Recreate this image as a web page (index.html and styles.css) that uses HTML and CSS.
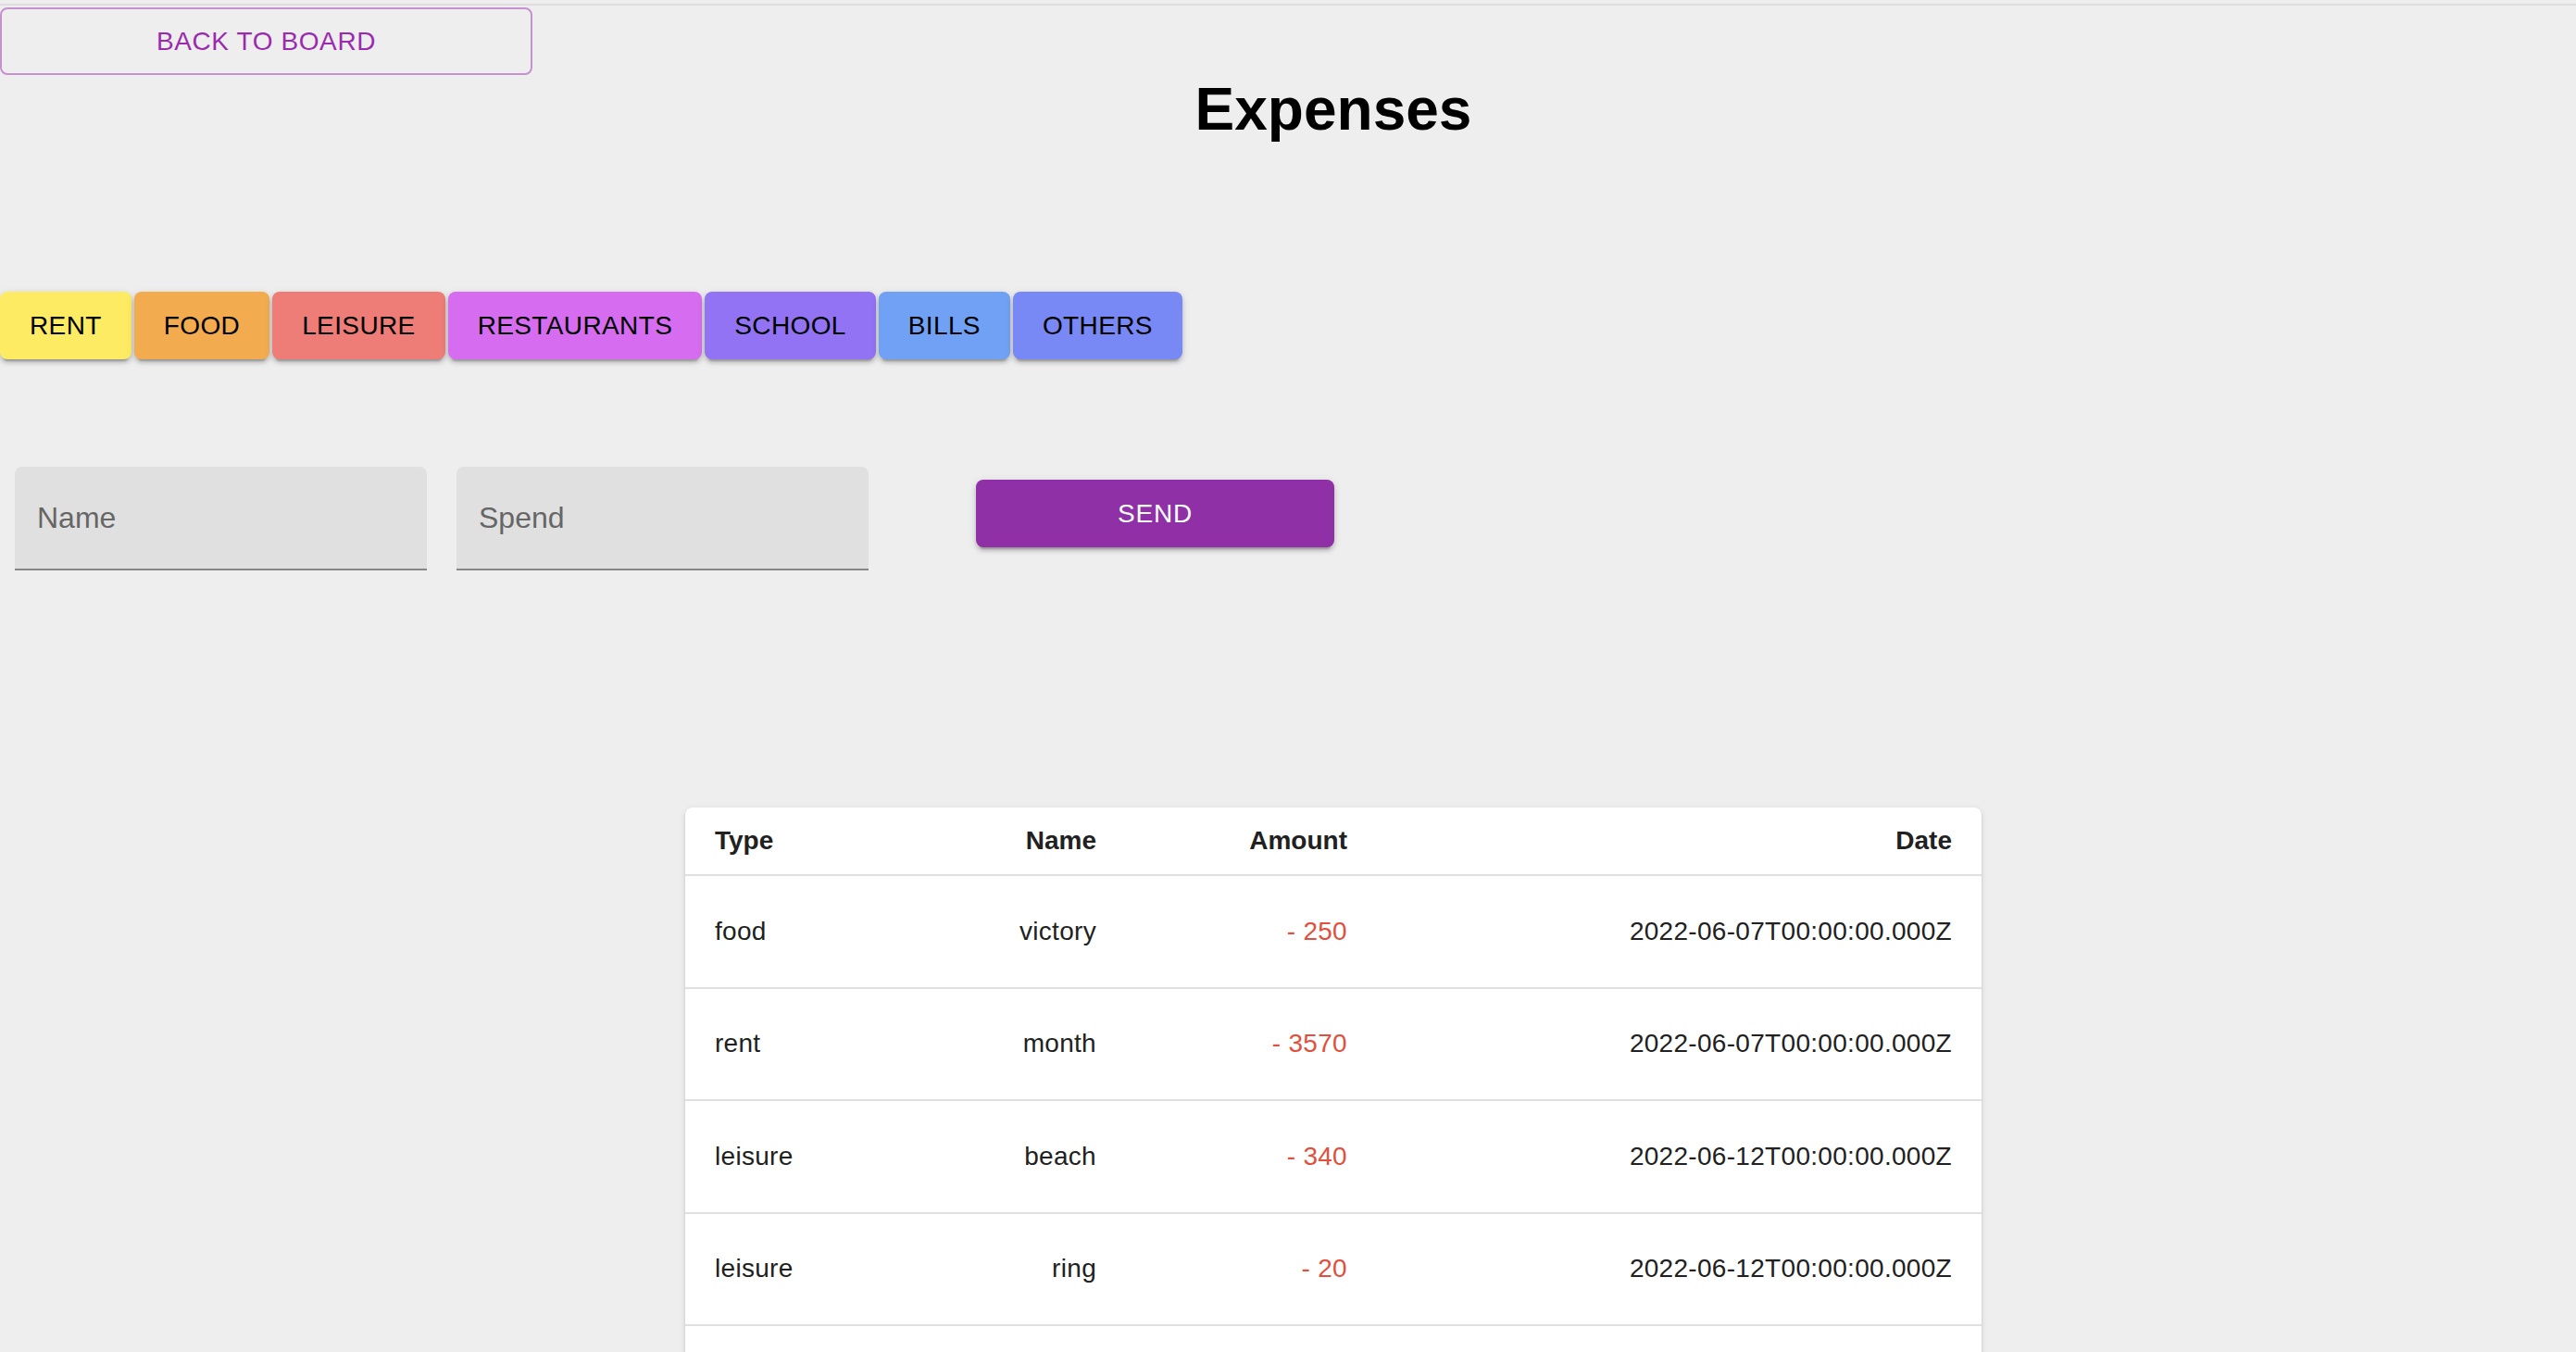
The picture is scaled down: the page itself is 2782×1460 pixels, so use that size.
FILE: index.html
```html
<!DOCTYPE html>
<html lang="en">
<head>
<meta charset="utf-8">
<title>Expenses</title>
<link rel="stylesheet" href="styles.css">
</head>
<body>
<div class="topline"></div>
<div class="page">
  <button class="back-btn">BACK TO BOARD</button>
  <h1 class="title">Expenses</h1>

  <div class="categories">
    <button class="cat cat-rent">RENT</button>
    <button class="cat cat-food">FOOD</button>
    <button class="cat cat-leisure">LEISURE</button>
    <button class="cat cat-restaurants">RESTAURANTS</button>
    <button class="cat cat-school">SCHOOL</button>
    <button class="cat cat-bills">BILLS</button>
    <button class="cat cat-others">OTHERS</button>
  </div>

  <div class="form-row">
    <div class="field"><span class="placeholder">Name</span></div>
    <div class="field"><span class="placeholder">Spend</span></div>
    <button class="send-btn">SEND</button>
  </div>

  <div class="table-wrap">
    <div class="table">
      <div class="row head">
        <div class="c-type">Type</div>
        <div class="c-name">Name</div>
        <div class="c-amount">Amount</div>
        <div class="c-date">Date</div>
      </div>
      <div class="row">
        <div class="c-type">food</div>
        <div class="c-name">victory</div>
        <div class="c-amount neg">- 250</div>
        <div class="c-date">2022-06-07T00:00:00.000Z</div>
      </div>
      <div class="row">
        <div class="c-type">rent</div>
        <div class="c-name">month</div>
        <div class="c-amount neg">- 3570</div>
        <div class="c-date">2022-06-07T00:00:00.000Z</div>
      </div>
      <div class="row">
        <div class="c-type">leisure</div>
        <div class="c-name">beach</div>
        <div class="c-amount neg">- 340</div>
        <div class="c-date">2022-06-12T00:00:00.000Z</div>
      </div>
      <div class="row">
        <div class="c-type">leisure</div>
        <div class="c-name">ring</div>
        <div class="c-amount neg">- 20</div>
        <div class="c-date">2022-06-12T00:00:00.000Z</div>
      </div>
      <div class="row">
        <div class="c-type"></div>
        <div class="c-name"></div>
        <div class="c-amount neg"></div>
        <div class="c-date"></div>
      </div>
    </div>
  </div>
</div>
</body>
</html>
```

FILE: styles.css
```css
html, body {
  margin: 0;
  padding: 0;
  background: #eeeeee;
  font-family: "Liberation Sans", Arial, Helvetica, sans-serif;
  color: #212121;
  overflow: hidden;
}

.topline {
  margin-top: 4px;
  height: 2px;
  background: #dcdcdc;
}

.page {
  padding-top: 2px;
}

button {
  font-family: "Liberation Sans", Arial, Helvetica, sans-serif;
  cursor: pointer;
}

.back-btn {
  display: block;
  box-sizing: border-box;
  width: 575px;
  height: 73px;
  margin: 0;
  padding: 0;
  background: transparent;
  border: 2px solid #c690d1;
  border-radius: 8px;
  color: #9a2bae;
  font-size: 28px;
  letter-spacing: 0.6px;
  line-height: 1;
}

.title {
  margin: 0;
  padding-left: 98px;
  text-align: center;
  font-size: 64px;
  line-height: 74px;
  font-weight: bold;
  color: #000;
}

.categories {
  display: flex;
  gap: 3px;
  margin-top: 160px;
}

.cat {
  height: 73px;
  padding: 0 32px;
  margin: 0;
  border: none;
  border-radius: 8px;
  font-size: 28px;
  letter-spacing: 0.38px;
  color: #000;
  box-shadow: 0 6px 2px -4px rgba(0,0,0,0.2), 0 4px 4px 0 rgba(0,0,0,0.14), 0 2px 10px 0 rgba(0,0,0,0.12);
}

.cat-rent { background: #fdeb63; }
.cat-food { background: #f2ac4f; }
.cat-leisure { background: #ee7c77; }
.cat-restaurants { background: #d66cef; }
.cat-school { background: #9273f3; }
.cat-bills { background: #71a1f5; }
.cat-others { background: #7888f4; }

.form-row {
  display: flex;
  align-items: flex-start;
  margin-top: 116px;
  padding-left: 16px;
}

.field {
  box-sizing: border-box;
  width: 445px;
  height: 112px;
  margin-right: 32px;
  padding-left: 24px;
  display: flex;
  align-items: center;
  background: #e0e0e0;
  border-radius: 8px 8px 0 0;
  border-bottom: 2px solid #878787;
}

.placeholder {
  font-size: 32px;
  color: #666666;
}

.send-btn {
  width: 387px;
  height: 73px;
  margin: 14px 0 0 84px;
  padding: 0;
  border: none;
  border-radius: 8px;
  background: #8f30a7;
  color: #ffffff;
  font-size: 28px;
  letter-spacing: 0.8px;
  box-shadow: 0 6px 2px -4px rgba(0,0,0,0.2), 0 4px 4px 0 rgba(0,0,0,0.14), 0 2px 10px 0 rgba(0,0,0,0.12);
}

.table-wrap {
  display: flex;
  justify-content: center;
  padding-left: 98px;
  margin-top: 256px;
}

.table {
  width: 1400px;
  background: #ffffff;
  border-radius: 8px;
  overflow: hidden;
  box-shadow: 0 4px 2px -2px rgba(0,0,0,0.2), 0 2px 2px 0 rgba(0,0,0,0.14), 0 2px 6px 0 rgba(0,0,0,0.12);
}

.row {
  display: grid;
  grid-template-columns: 280px 196px 271px 653px;
  align-items: center;
  height: 119.5px;
  border-bottom: 2px solid #e0e0e0;
  font-size: 28px;
  letter-spacing: 0.3px;
  color: #212121;
}

.row.head {
  height: 72px;
  font-weight: bold;
  letter-spacing: 0;
}

.row > div {
  padding: 0 32px;
  white-space: nowrap;
}

.c-type { text-align: left; }
.c-name, .c-amount, .c-date { text-align: right; }

.neg { color: #e2503d; }
```
